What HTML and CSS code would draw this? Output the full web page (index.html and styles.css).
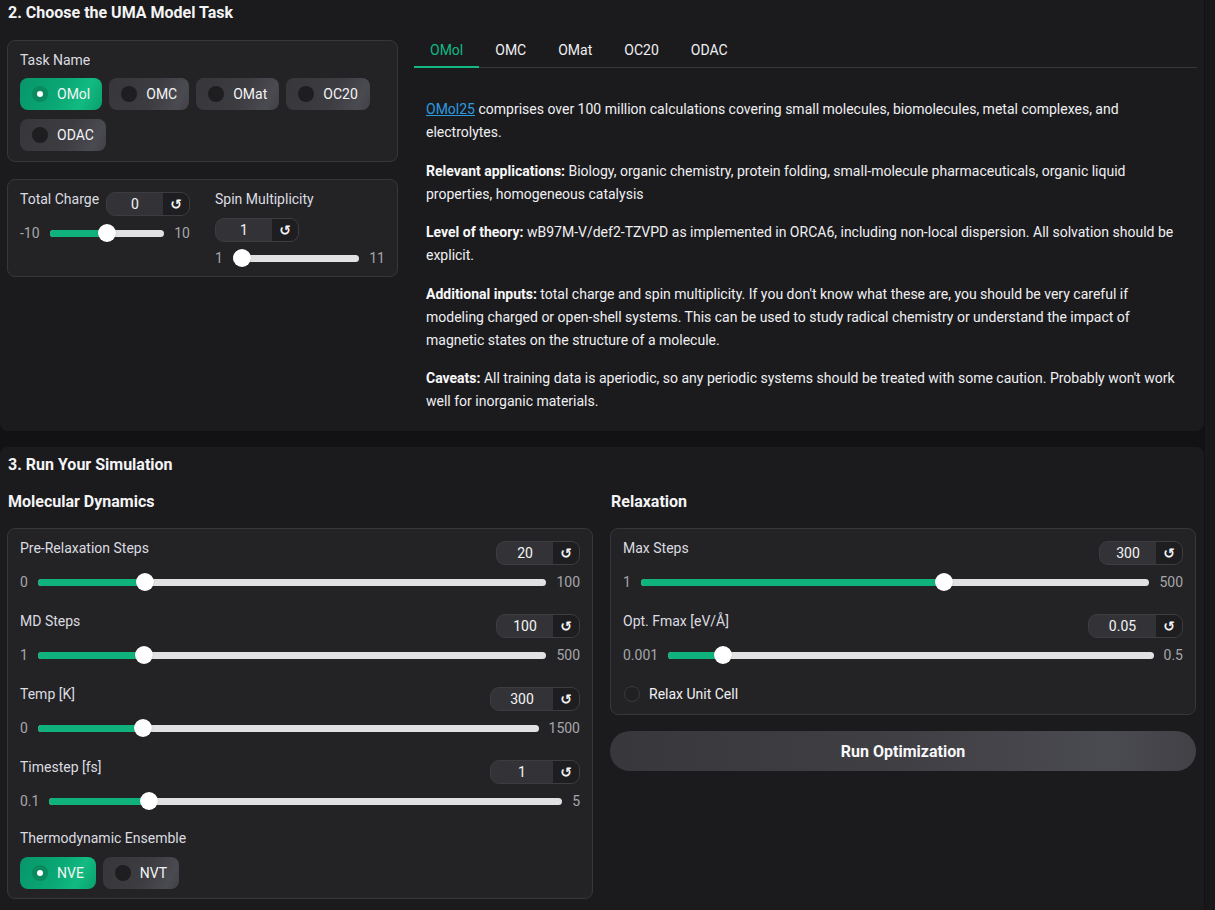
FILE: index.html
```html
<!DOCTYPE html>
<html>
<head>
<meta charset="utf-8">
<title>UMA</title>
<link rel="stylesheet" href="styles.css">
</head>
<body>
<div class="main">
  <section class="block sec2">
    <h2 class="title">2. Choose the UMA Model Task</h2>
    <div class="row2">
      <div class="leftcol">
        <div class="panel task">
          <div class="label">Task Name</div>
          <div class="radios">
            <span class="radio on"><span class="dot"></span>OMol</span>
            <span class="radio"><span class="dot"></span>OMC</span>
            <span class="radio"><span class="dot"></span>OMat</span>
            <span class="radio"><span class="dot"></span>OC20</span>
            <span class="radio"><span class="dot"></span>ODAC</span>
          </div>
        </div>
        <div class="panel charge">
          <div class="ccol">
            <div class="head">
              <span class="label">Total Charge</span>
              <div class="num"><span class="val">0</span><span class="reset">↺</span></div>
            </div>
            <div class="slider">
              <span class="mn">-10</span>
              <div class="track" style="--p:0.5"><div class="fill"></div><div class="thumb"></div></div>
              <span class="mx">10</span>
            </div>
          </div>
          <div class="ccol">
            <div class="label">Spin Multiplicity</div>
            <div class="num stacked"><span class="val">1</span><span class="reset">↺</span></div>
            <div class="slider spin">
              <span class="mn">1</span>
              <div class="track" style="--p:0"><div class="fill"></div><div class="thumb"></div></div>
              <span class="mx">11</span>
            </div>
          </div>
        </div>
      </div>
      <div class="rightcol">
        <div class="tabs">
          <span class="tab active">OMol</span>
          <span class="tab">OMC</span>
          <span class="tab">OMat</span>
          <span class="tab">OC20</span>
          <span class="tab">ODAC</span>
        </div>
        <div class="prose">
          <p><a href="#">OMol25</a> comprises over 100 million calculations covering small molecules, biomolecules, metal complexes, and electrolytes.</p>
          <p><b>Relevant applications:</b> Biology, organic chemistry, protein folding, small-molecule pharmaceuticals, organic liquid properties, homogeneous catalysis</p>
          <p><b>Level of theory:</b> wB97M-V/def2-TZVPD as implemented in ORCA6, including non-local dispersion. All solvation should be explicit.</p>
          <p><b>Additional inputs:</b> total charge and spin multiplicity. If you don't know what these are, you should be very careful if modeling charged or open-shell systems. This can be used to study radical chemistry or understand the impact of magnetic states on the structure of a molecule.</p>
          <p><b>Caveats:</b> All training data is aperiodic, so any periodic systems should be treated with some caution. Probably won't work well for inorganic materials.</p>
        </div>
      </div>
    </div>
  </section>

  <section class="block sec3">
    <h2 class="title">3. Run Your Simulation</h2>
    <div class="row3">
      <div class="col3">
        <h3 class="sub">Molecular Dynamics</h3>
        <div class="panel sim">
          <div class="sblock">
            <div class="head">
              <span class="label">Pre-Relaxation Steps</span>
              <div class="num"><span class="val">20</span><span class="reset">↺</span></div>
            </div>
            <div class="slider">
              <span class="mn">0</span>
              <div class="track" style="--p:0.2"><div class="fill"></div><div class="thumb"></div></div>
              <span class="mx">100</span>
            </div>
          </div>
          <div class="sblock">
            <div class="head">
              <span class="label">MD Steps</span>
              <div class="num"><span class="val">100</span><span class="reset">↺</span></div>
            </div>
            <div class="slider">
              <span class="mn">1</span>
              <div class="track" style="--p:0.1984"><div class="fill"></div><div class="thumb"></div></div>
              <span class="mx">500</span>
            </div>
          </div>
          <div class="sblock">
            <div class="head">
              <span class="label">Temp [K]</span>
              <div class="num wide"><span class="val">300</span><span class="reset">↺</span></div>
            </div>
            <div class="slider">
              <span class="mn">0</span>
              <div class="track" style="--p:0.2"><div class="fill"></div><div class="thumb"></div></div>
              <span class="mx">1500</span>
            </div>
          </div>
          <div class="sblock">
            <div class="head">
              <span class="label">Timestep [fs]</span>
              <div class="num wide"><span class="val">1</span><span class="reset">↺</span></div>
            </div>
            <div class="slider">
              <span class="mn">0.1</span>
              <div class="track" style="--p:0.1837"><div class="fill"></div><div class="thumb"></div></div>
              <span class="mx">5</span>
            </div>
          </div>
          <div class="label ens">Thermodynamic Ensemble</div>
          <div class="radios">
            <span class="radio on"><span class="dot"></span>NVE</span>
            <span class="radio"><span class="dot"></span>NVT</span>
          </div>
        </div>
      </div>
      <div class="col3">
        <h3 class="sub">Relaxation</h3>
        <div class="panel sim relax">
          <div class="sblock">
            <div class="head">
              <span class="label">Max Steps</span>
              <div class="num"><span class="val">300</span><span class="reset">↺</span></div>
            </div>
            <div class="slider">
              <span class="mn">1</span>
              <div class="track" style="--p:0.5992"><div class="fill"></div><div class="thumb"></div></div>
              <span class="mx">500</span>
            </div>
          </div>
          <div class="sblock">
            <div class="head">
              <span class="label">Opt. Fmax [eV/Å]</span>
              <div class="num wider"><span class="val">0.05</span><span class="reset">↺</span></div>
            </div>
            <div class="slider">
              <span class="mn">0.001</span>
              <div class="track" style="--p:0.0982"><div class="fill"></div><div class="thumb"></div></div>
              <span class="mx">0.5</span>
            </div>
          </div>
          <div class="check"><span class="box"></span>Relax Unit Cell</div>
        </div>
        <button class="run">Run Optimization</button>
      </div>
    </div>
  </section>
</div>
</body>
</html>
```

FILE: styles.css
```css
* { box-sizing: border-box; }
html, body { margin: 0; padding: 0; }
body {
  background: #18181a;
  font-family: Roboto, "Liberation Sans", sans-serif;
  font-size: 14px;
  color: #e6e6e9;
  width: 1215px;
  height: 910px;
  overflow: hidden;
}
.main {
  width: 1205px;
  background: #121214;
  min-height: 910px;
}
.block {
  width: 1204px;
  background: #1b1b1e;
  border-radius: 8px;
}
.sec2 {
  padding: 2px 7px 18px 7px;
  border-top-left-radius: 0;
  border-top-right-radius: 0;
}
.sec3 {
  margin-top: 16px;
  padding: 7px 7px 20px 7px;
}
.title {
  margin: 0;
  font-size: 16px;
  font-weight: 700;
  line-height: 22px;
  color: #f4f4f5;
  padding-left: 1px;
}
.sec2 .title { margin-bottom: 16px; }
.sec3 .title { margin-bottom: 15px; }
.sub {
  margin: 0 0 15px 0;
  font-size: 16px;
  font-weight: 700;
  line-height: 22px;
  color: #f4f4f5;
  padding-left: 1px;
}
.row2 { display: flex; gap: 16px; align-items: flex-start; }
.leftcol { width: 391px; display: flex; flex-direction: column; gap: 17px; }
.rightcol { flex: 1; margin-top: -8px; }

.panel {
  background: #232326;
  border: 1px solid #37373b;
  border-radius: 8px;
}
.label { line-height: 20px; color: #dcdce0; }

.task { padding: 9px 12px 10px 12px; }
.task .label { margin-bottom: 8px; }
.radios { display: flex; flex-wrap: wrap; column-gap: 7px; row-gap: 9px; }
.radio {
  display: inline-flex;
  align-items: center;
  gap: 9px;
  height: 32px;
  padding: 0 12px 0 12px;
  border-radius: 8px;
  color: #f4f4f5;
  background: linear-gradient(115deg, #37373b 0%, #3c3c41 55%, #4a4a51 85%, #404045 100%);
}
.radio .dot {
  width: 16px; height: 16px; border-radius: 50%;
  background: #1e1e21;
  flex: none;
  position: relative;
}
.radio.on {
  background: linear-gradient(115deg, #07966a 0%, #0aa874 50%, #12bb82 75%, #0a9f6c 100%);
}
.radio.on .dot { background: #0b8a5f; }
.radio.on .dot::after {
  content: "";
  position: absolute;
  left: 5px; top: 5px;
  width: 6px; height: 6px;
  border-radius: 50%;
  background: #fff;
}

.charge { display: flex; gap: 25px; padding: 9px 12px 8px 12px; }
.ccol { flex: 1; display: flex; flex-direction: column; }
.head { display: flex; justify-content: space-between; align-items: flex-start; }
.head .num { margin-top: 3px; }
.num {
  display: flex;
  height: 24px;
  width: 84px;
  border: 1px solid #3d3d41;
  border-radius: 9px;
  overflow: hidden;
  background: #333337;
}
.num.wide { width: 90px; }
.num.wider { width: 95px; }
.num .val {
  flex: 1;
  text-align: center;
  line-height: 22px;
  color: #f4f4f5;
}
.num .reset {
  width: 26px;
  background: #1e1e21;
  text-align: center;
  line-height: 22px;
  font-family: "DejaVu Sans", sans-serif;
  font-weight: bold;
  font-size: 14px;
  color: #f4f4f5;
}
.num.stacked { margin-top: 9px; }
.slider {
  display: flex;
  align-items: center;
  gap: 10px;
  height: 20px;
  margin-top: 7px;
}
.slider.spin { margin-top: 6px; }
.mn, .mx { color: #a6a6ab; line-height: 20px; }
.track {
  flex: 1;
  position: relative;
  height: 7px;
  border-radius: 4px;
  background: #e1e1e3;
}
.fill {
  position: absolute;
  left: 0; top: 0; bottom: 0;
  width: calc(9px + var(--p) * (100% - 18px));
  background: #0fb27a;
  border-radius: 4px;
}
.thumb {
  position: absolute;
  top: 50%;
  left: calc(9px + var(--p) * (100% - 18px));
  width: 18px; height: 18px;
  margin: -9px 0 0 -9px;
  border-radius: 50%;
  background: #fff;
  box-shadow: 0 0 1px rgba(0,0,0,0.4);
}

.tabs {
  display: flex;
  border-bottom: 1px solid #38383c;
}
.tab {
  position: relative;
  padding: 8px 16px 7px 16px;
  line-height: 20px;
  color: #f0f0f2;
}
.tab.active { color: #12b981; }
.tab.active::after {
  content: "";
  position: absolute;
  left: 0; right: 0; bottom: -1px;
  height: 2px;
  background: #12b981;
}
.prose { padding: 30px 12px 0 12px; }
.prose p { margin: 0 0 15.5px 0; line-height: 23px; color: #f0f0f2; }
.prose p:last-child { margin-bottom: 0; }
.prose b { font-weight: 700; color: #f8f8fa; }
.prose a { color: #2a9be0; text-decoration: underline; }

.row3 { display: flex; gap: 17px; align-items: flex-start; }
.col3 { width: 586px; display: flex; flex-direction: column; }
.sim { padding: 9px 12px 9px 12px; }
.sblock { margin-bottom: 19px; }
.ens { margin-top: -2px; margin-bottom: 9px; }
.sim .radios { column-gap: 7px; }
.check {
  display: flex;
  align-items: center;
  gap: 9px;
  line-height: 20px;
  color: #f0f0f2;
  margin-bottom: 1px;
}
.check .box {
  width: 16px; height: 16px;
  border-radius: 50%;
  border: 1px solid #3a3a3e;
  background: #202023;
  margin-left: 1px;
}
.run {
  margin-top: 16px;
  height: 40px;
  border: none;
  border-radius: 20px;
  background: linear-gradient(90deg, #38383c 0%, #3f3f44 50%, #4a4a51 85%, #414146 100%);
  color: #f8f8fa;
  font-family: Roboto, "Liberation Sans", sans-serif;
  font-size: 16px;
  font-weight: 700;
}
```
